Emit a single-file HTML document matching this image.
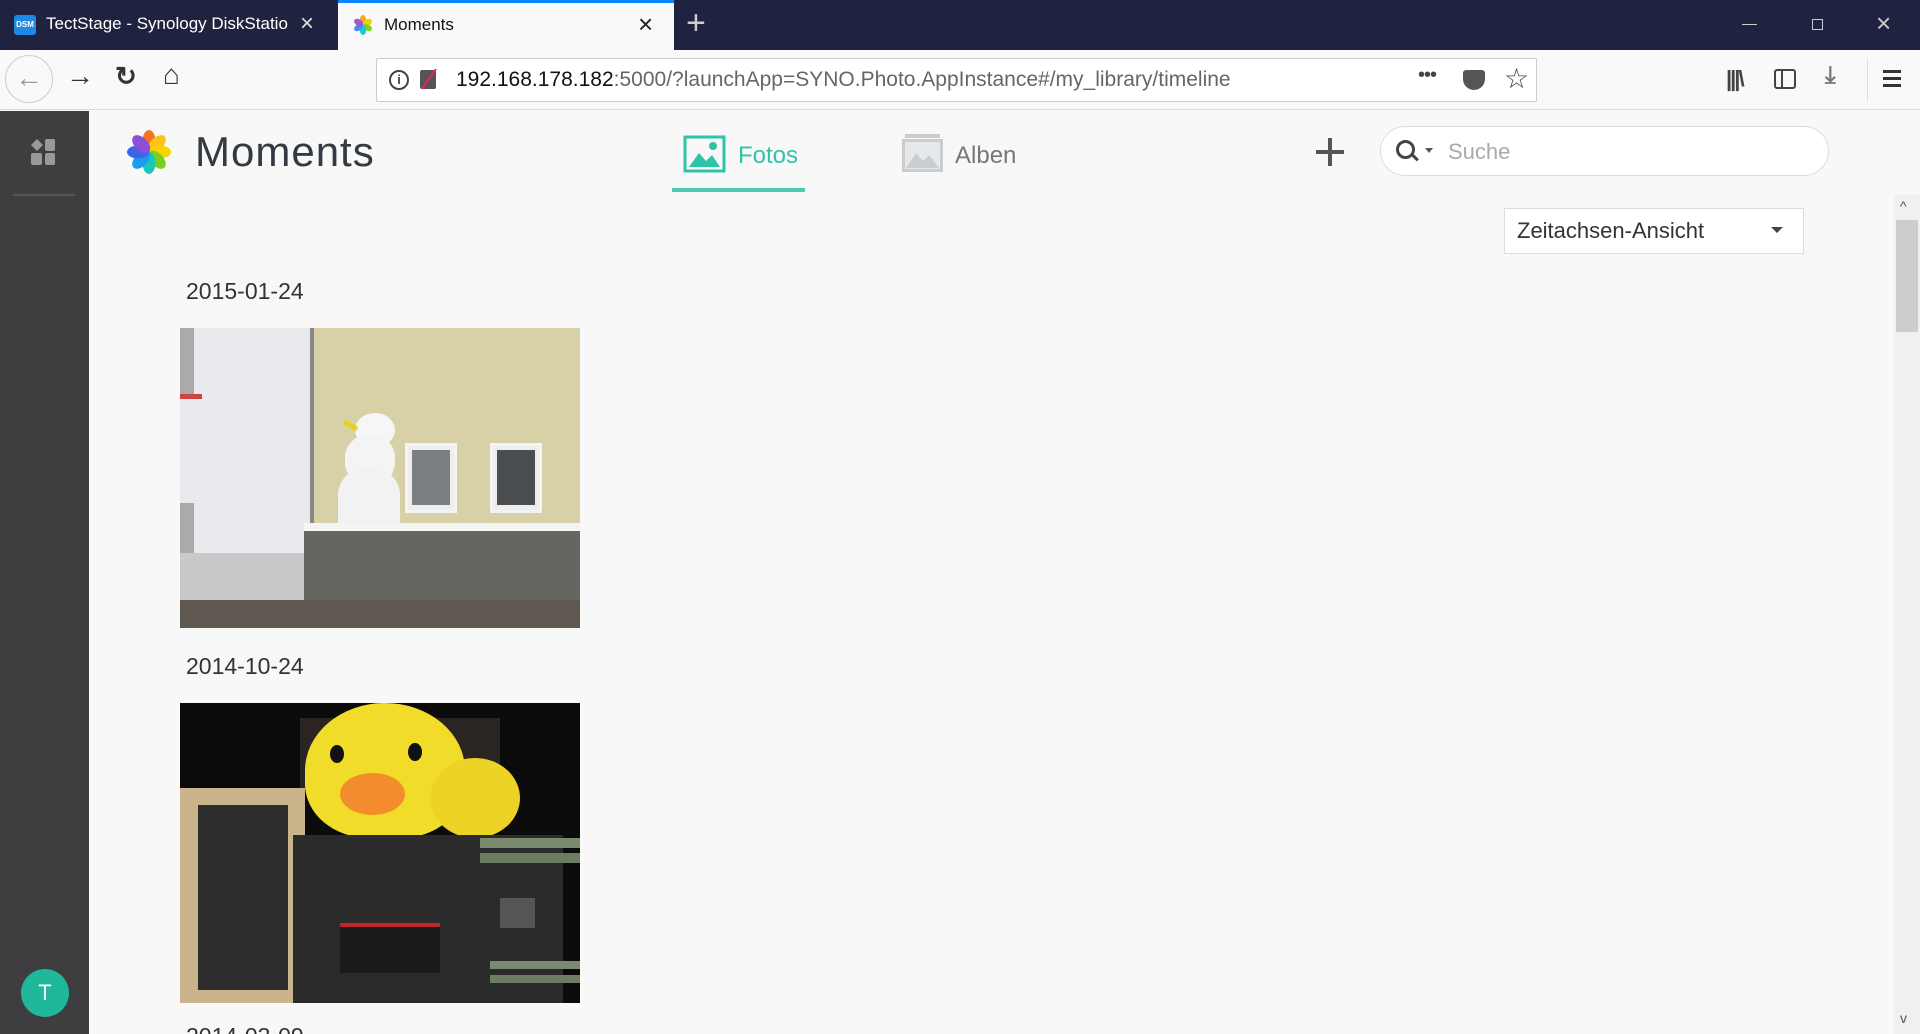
<!DOCTYPE html>
<html style="width:1920px;height:1034px;overflow:hidden"><head><meta charset="utf-8"><style>
*{margin:0;padding:0;box-sizing:border-box}
body{width:1920px;height:1034px;overflow:hidden;background:#f8f8f8;font-family:"Liberation Sans",sans-serif;position:relative}
.abs{position:absolute}
#wrap{position:absolute;left:0;top:0;width:1920px;height:1034px;overflow:hidden}
</style></head><body><div id="wrap">
<!-- tab bar -->
<div class="abs" style="left:0;top:0;width:1920px;height:50px;background:#202340"></div>
<div class="abs" style="left:14px;top:15px;width:22px;height:20px;background:#1e88e5;border-radius:3px;color:#fff;font-size:8px;font-weight:bold;line-height:20px;text-align:center">DSM</div>
<div class="abs" style="left:46px;top:14px;color:#fff;font-size:17px;white-space:nowrap;width:250px;overflow:hidden">TectStage - Synology DiskStatio</div>
<div class="abs" style="left:300px;top:10px;color:#ddd;font-size:24px">×</div>
<div class="abs" style="left:338px;top:0;width:336px;height:50px;background:#f9f9fa;border-top:3px solid #0a84ff"></div>
<svg class="abs" style="left:352px;top:14px" width="22" height="22" viewBox="-11 -11 22 22"><g><ellipse cx="0" cy="-5" rx="3.2" ry="5" fill="#f5a623"/><ellipse cx="0" cy="-5" rx="3.2" ry="5" fill="#ffcc00" transform="rotate(60)"/><ellipse cx="0" cy="-5" rx="3.2" ry="5" fill="#7ed321" transform="rotate(120)"/><ellipse cx="0" cy="-5" rx="3.2" ry="5" fill="#1ec6e6" transform="rotate(180)"/><ellipse cx="0" cy="-5" rx="3.2" ry="5" fill="#4a90e2" transform="rotate(240)"/><ellipse cx="0" cy="-5" rx="3.2" ry="5" fill="#9b59d0" transform="rotate(300)"/></g></svg>
<div class="abs" style="left:384px;top:15px;color:#111;font-size:17px">Moments</div>
<div class="abs" style="left:638px;top:9px;color:#222;font-size:26px">×</div>
<div class="abs" style="left:686px;top:4px;color:#ccc;font-size:34px;font-weight:300">+</div>
<div class="abs" style="left:1742px;top:24px;width:15px;height:1px;background:#ccc"></div>
<div class="abs" style="left:1812px;top:19px;width:11px;height:11px;border:1px solid #ccc"></div>
<div class="abs" style="left:1876px;top:8px;color:#ccc;font-size:26px">×</div>
<!-- nav bar -->
<div class="abs" style="left:0;top:50px;width:1920px;height:60px;background:#f9f9fa;border-bottom:1px solid #ddd"></div>
<div class="abs" style="left:5px;top:55px;width:48px;height:48px;border:1px solid #ccc;border-radius:50%;color:#999;font-size:28px;text-align:center;line-height:44px">←</div>
<div class="abs" style="left:66px;top:60px;color:#333;font-size:28px">→</div>
<div class="abs" style="left:115px;top:61px;color:#333;font-size:26px;font-weight:bold">↻</div>
<div class="abs" style="left:163px;top:59px;color:#333;font-size:28px;font-weight:bold">⌂</div>
<div class="abs" style="left:376px;top:58px;width:1161px;height:44px;background:#fff;border:1px solid #ccc;border-radius:2px"></div>
<div class="abs" style="left:389px;top:70px;width:20px;height:20px;border:2px solid #444;border-radius:50%;font-size:13px;text-align:center;line-height:16px;color:#444;font-weight:bold">i</div>
<div class="abs" style="left:420px;top:70px;width:16px;height:19px;background:#555;border-radius:2px"></div>
<div class="abs" style="left:417px;top:78px;width:24px;height:2px;background:#e22850;transform:rotate(-55deg)"></div>
<div class="abs" style="left:456px;top:68px;font-size:21px;color:#111;white-space:nowrap">192.168.178.182<span style="color:#666">:5000/?launchApp=SYNO.Photo.AppInstance#/my_library/timeline</span></div>
<div class="abs" style="left:1418px;top:64px;font-size:20px;color:#444;letter-spacing:-1px">•••</div>
<div class="abs" style="left:1463px;top:70px;width:22px;height:20px;background:#555;border-radius:3px 3px 11px 11px"></div>
<div class="abs" style="left:1504px;top:62px;font-size:28px;color:#444">☆</div>
<div class="abs" style="left:1726px;top:66px;font-size:22px;color:#444;font-weight:bold;letter-spacing:-2px">|||\</div>
<div class="abs" style="left:1774px;top:69px;width:22px;height:20px;border:2px solid #444;border-radius:3px"><div style="width:7px;height:16px;border-right:2px solid #444"></div></div>
<div class="abs" style="left:1825px;top:62px;font-size:24px;color:#777;font-weight:bold">⤓</div>
<div class="abs" style="left:1867px;top:58px;width:1px;height:44px;background:#ddd"></div>
<div class="abs" style="left:1883px;top:70px;width:18px;height:3px;background:#333;box-shadow:0 7px 0 #333,0 14px 0 #333"></div>
<!-- sidebar -->
<div class="abs" style="left:0;top:111px;width:89px;height:923px;background:#3e3d40"></div>
<div class="abs" style="left:32px;top:140px;width:10px;height:10px;background:#999;transform:rotate(45deg) scale(.85)"></div>
<div class="abs" style="left:45px;top:139px;width:10px;height:12px;background:#999;border-radius:2px"></div>
<div class="abs" style="left:31px;top:153px;width:11px;height:12px;background:#999;border-radius:2px"></div>
<div class="abs" style="left:45px;top:153px;width:10px;height:12px;background:#999;border-radius:2px"></div>
<div class="abs" style="left:13px;top:194px;width:62px;height:2px;background:#555"></div>
<div class="abs" style="left:21px;top:969px;width:48px;height:48px;background:#1fb89a;border-radius:50%;color:#fff;font-size:22px;text-align:center;line-height:48px">T</div>
<!-- header -->
<svg class="abs" style="left:127px;top:130px" width="44" height="44" viewBox="-22 -22 44 44"><g><ellipse cx="0" cy="-11" rx="6.5" ry="11" fill="#f6741d"/><ellipse cx="0" cy="-11" rx="6.5" ry="11" fill="#fbc31a" transform="rotate(45)"/><ellipse cx="0" cy="-11" rx="6.5" ry="11" fill="#f8d500" transform="rotate(90)"/><ellipse cx="0" cy="-11" rx="6.5" ry="11" fill="#7ccd22" transform="rotate(135)"/><ellipse cx="0" cy="-11" rx="6.5" ry="11" fill="#1cc6b8" transform="rotate(180)"/><ellipse cx="0" cy="-11" rx="6.5" ry="11" fill="#1c9cf0" transform="rotate(225)"/><ellipse cx="0" cy="-11" rx="6.5" ry="11" fill="#3a67e8" transform="rotate(270)"/><ellipse cx="0" cy="-11" rx="6.5" ry="11" fill="#8b4fd8" transform="rotate(315)"/></g></svg>
<div class="abs" style="left:195px;top:128px;font-size:42px;color:#333a44;letter-spacing:1px">Moments</div>
<svg class="abs" style="left:683px;top:135px" width="43" height="38" viewBox="0 0 43 38"><rect x="2" y="2" width="39" height="34" fill="none" stroke="#2fc4a6" stroke-width="3"/><path d="M6 32 L16 18 L23 26 L29 20 L37 32Z" fill="#2fc4a6"/><circle cx="30" cy="11" r="4" fill="#2fc4a6"/></svg>
<div class="abs" style="left:738px;top:142px;font-size:24px;color:#31c2a9">Fotos</div>
<div class="abs" style="left:672px;top:188px;width:133px;height:4px;background:#4dc8b2"></div>
<svg class="abs" style="left:901px;top:133px" width="43" height="40" viewBox="0 0 43 40"><rect x="4" y="1" width="35" height="4" fill="#c9cdd0"/><rect x="1" y="6" width="41" height="33" fill="#c9cdd0"/><rect x="4" y="9" width="35" height="27" fill="#e6e8ea"/><path d="M5 35 L15 20 L22 28 L28 22 L38 35Z" fill="#c9cdd0"/></svg>
<div class="abs" style="left:955px;top:142px;font-size:24px;color:#777">Alben</div>
<div class="abs" style="left:1316px;top:150px;width:28px;height:4px;background:#555"></div>
<div class="abs" style="left:1328px;top:138px;width:4px;height:28px;background:#555"></div>
<div class="abs" style="left:1380px;top:126px;width:449px;height:50px;background:#fff;border:1px solid #ddd;border-radius:25px"></div>
<div class="abs" style="left:1396px;top:140px;width:19px;height:19px;border:3px solid #444;border-radius:50%"></div>
<div class="abs" style="left:1411px;top:156px;width:8px;height:3px;background:#444;transform:rotate(45deg)"></div>
<div class="abs" style="left:1425px;top:148px;border:4px solid transparent;border-top:5px solid #555"></div>
<div class="abs" style="left:1448px;top:139px;font-size:22px;color:#aaa">Suche</div>
<!-- dropdown -->
<div class="abs" style="left:1504px;top:208px;width:300px;height:46px;background:#fff;border:1px solid #ddd"></div>
<div class="abs" style="left:1517px;top:218px;font-size:22px;color:#333">Zeitachsen-Ansicht</div>
<div class="abs" style="left:1771px;top:227px;border:6px solid transparent;border-top:6px solid #444"></div>
<!-- scrollbar -->
<div class="abs" style="left:1894px;top:194px;width:26px;height:840px;background:#f0f0f0"></div>
<div class="abs" style="left:1900px;top:198px;font-size:14px;color:#555">^</div>
<div class="abs" style="left:1896px;top:220px;width:22px;height:112px;background:#cdcdcd"></div>
<div class="abs" style="left:1900px;top:1010px;font-size:14px;color:#555">v</div>
<!-- content -->
<div class="abs" style="left:186px;top:278px;font-size:23px;color:#333">2015-01-24</div>
<div class="abs" style="left:180px;top:328px;width:400px;height:300px;overflow:hidden;background:#d8d1a7">
 <div class="abs" style="left:0;top:0;width:130px;height:300px;background:#e8eaed"></div>
 <div class="abs" style="left:0;top:0;width:14px;height:70px;background:#aaa"></div>
 <div class="abs" style="left:0;top:66px;width:22px;height:5px;background:#c44"></div>
 <div class="abs" style="left:0;top:175px;width:14px;height:70px;background:#aaa"></div>
 <div class="abs" style="left:130px;top:0;width:4px;height:230px;background:#888"></div>
 <div class="abs" style="left:225px;top:115px;width:52px;height:70px;background:#eee;border:3px solid #f4f4f4"><div style="margin:4px;height:55px;background:#7b7f82"></div></div>
 <div class="abs" style="left:310px;top:115px;width:52px;height:70px;background:#eee;border:3px solid #f4f4f4"><div style="margin:4px;height:55px;background:#4a4e50"></div></div>
 <div class="abs" style="left:175px;top:85px;width:40px;height:34px;background:#f6f6f6;border-radius:50%"></div>
 <div class="abs" style="left:165px;top:107px;width:50px;height:50px;background:#f4f4f4;border-radius:45%"></div>
 <div class="abs" style="left:158px;top:140px;width:62px;height:60px;background:#f2f2f2;border-radius:45% 45% 10% 10%"></div>
 <div class="abs" style="left:163px;top:95px;width:15px;height:5px;background:#e6d21c;transform:rotate(30deg)"></div>
 <div class="abs" style="left:124px;top:195px;width:276px;height:10px;background:#f4f4f4"></div>
 <div class="abs" style="left:124px;top:203px;width:276px;height:77px;background:#67655f"></div>
 <div class="abs" style="left:0;top:225px;width:124px;height:55px;background:#c9c9c9"></div>
 <div class="abs" style="left:0;top:272px;width:400px;height:28px;background:#5e5850"></div>
</div>
<div class="abs" style="left:186px;top:653px;font-size:23px;color:#333">2014-10-24</div>
<div class="abs" style="left:180px;top:703px;width:400px;height:300px;overflow:hidden;background:#0b0b0b">
 <div class="abs" style="left:120px;top:15px;width:200px;height:70px;background:#2a2522"></div>
 <div class="abs" style="left:125px;top:0;width:160px;height:135px;background:#f2dc2a;border-radius:50% 50% 40% 40%"></div>
 <div class="abs" style="left:250px;top:55px;width:90px;height:80px;background:#ecd326;border-radius:50%"></div>
 <div class="abs" style="left:150px;top:42px;width:14px;height:18px;background:#111;border-radius:50%"></div>
 <div class="abs" style="left:228px;top:40px;width:14px;height:18px;background:#111;border-radius:50%"></div>
 <div class="abs" style="left:160px;top:70px;width:65px;height:42px;background:#f28c2c;border-radius:50%"></div>
 <div class="abs" style="left:0;top:85px;width:125px;height:215px;background:#c9b48c"></div>
 <div class="abs" style="left:18px;top:102px;width:90px;height:185px;background:#2d2d2d"></div>
 <div class="abs" style="left:113px;top:132px;width:270px;height:168px;background:#2b2b2b"></div>
 <div class="abs" style="left:160px;top:220px;width:100px;height:50px;background:#1a1a1a;border-top:4px solid #c0252a"></div>
 <div class="abs" style="left:300px;top:135px;width:110px;height:10px;background:#7a8a6e"></div>
 <div class="abs" style="left:300px;top:150px;width:110px;height:10px;background:#6d7d63"></div>
 <div class="abs" style="left:310px;top:258px;width:110px;height:8px;background:#7a8a6e"></div>
 <div class="abs" style="left:310px;top:272px;width:110px;height:8px;background:#6d7d63"></div>
 <div class="abs" style="left:320px;top:195px;width:35px;height:30px;background:#555"></div>
</div>
<div class="abs" style="left:186px;top:1025px;font-size:23px;color:#333;height:9px;overflow:hidden;line-height:23px">2014-03-09</div>
</div></body></html>
